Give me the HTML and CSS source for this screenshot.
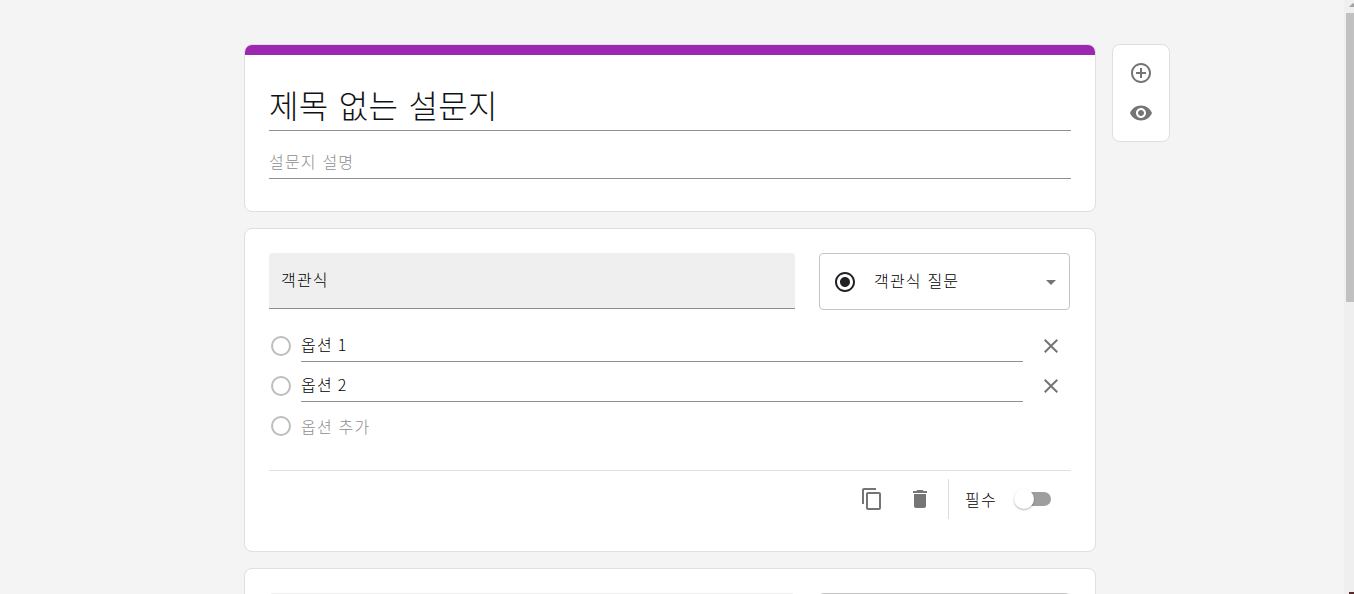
FILE: index.html
```html
<!DOCTYPE html>
<html lang="ko">
<head>
<meta charset="utf-8">
<title>설문지</title>
<link rel="stylesheet" href="styles.css">
</head>
<body>
<div class="viewport">
  <main class="page">
    <div class="cards">
      <section class="card title-card">
        <h1 class="form-title">제목 없는 설문지</h1>
        <div class="form-desc">설문지 설명</div>
      </section>
      <section class="card question-card">
        <div class="question-head">
          <div class="question-field">객관식</div>
          <div class="type-select">
            <svg class="icon dark" viewBox="0 0 24 24"><path d="M12 7c-2.76 0-5 2.24-5 5s2.24 5 5 5 5-2.24 5-5-2.24-5-5-5zm0-5C6.48 2 2 6.48 2 12s4.48 10 10 10 10-4.48 10-10S17.52 2 12 2zm0 18c-4.42 0-8-3.58-8-8s3.58-8 8-8 8 3.58 8 8-3.58 8-8 8z"/></svg>
            <span class="type-label">객관식 질문</span>
            <svg class="icon" viewBox="0 0 24 24"><path d="M7 10l5 5 5-5z"/></svg>
          </div>
        </div>
        <div class="options">
          <div class="option">
            <span class="radio"></span>
            <span class="option-text">옵션 1</span>
            <svg class="icon" viewBox="0 0 24 24"><path d="M19 6.41L17.59 5 12 10.59 6.41 5 5 6.41 10.59 12 5 17.59 6.41 19 12 13.41 17.59 19 19 17.59 13.41 12z"/></svg>
          </div>
          <div class="option">
            <span class="radio"></span>
            <span class="option-text">옵션 2</span>
            <svg class="icon" viewBox="0 0 24 24"><path d="M19 6.41L17.59 5 12 10.59 6.41 5 5 6.41 10.59 12 5 17.59 6.41 19 12 13.41 17.59 19 19 17.59 13.41 12z"/></svg>
          </div>
          <div class="option">
            <span class="radio"></span>
            <span class="option-add">옵션 추가</span>
          </div>
        </div>
        <div class="question-foot">
          <svg class="icon" viewBox="0 0 24 24"><path d="M16 1H4c-1.1 0-2 .9-2 2v14h2V3h12V1zm3 4H8c-1.1 0-2 .9-2 2v14c0 1.100.9 2 2 2h11c1.100 0 2-.9 2-2V7c0-1.100-.9-2-2-2zm0 16H8V7h11v14z"/></svg>
          <svg class="icon" viewBox="0 0 24 24"><path d="M6 19c0 1.100.9 2 2 2h8c1.100 0 2-.9 2-2V7H6v12zM19 4h-3.500l-1-1h-5l-1 1H5v2h14V4z"/></svg>
          <div class="required">
            <span class="required-label">필수</span>
            <span class="switch"><span class="knob"></span></span>
          </div>
        </div>
      </section>
      <section class="card question-card">
        <div class="question-head">
          <div class="question-field"></div>
          <div class="type-select"></div>
        </div>
      </section>
    </div>
    <aside class="toolbar">
      <svg class="icon" viewBox="0 0 24 24"><path d="M13 7h-2v4H7v2h4v4h2v-4h4v-2h-4V7zm-1-5C6.480 2 2 6.480 2 12s4.480 10 10 10 10-4.480 10-10S17.520 2 12 2zm0 18c-4.410 0-8-3.590-8-8s3.590-8 8-8 8 3.590 8 8-3.590 8-8 8z"/></svg>
      <svg class="icon" viewBox="0 0 24 24"><path d="M12 4.500C7 4.500 2.730 7.610 1 12c1.730 4.390 6 7.500 11 7.500s9.270-3.110 11-7.500c-1.730-4.390-6-7.500-11-7.500zM12 17c-2.760 0-5-2.240-5-5s2.240-5 5-5 5 2.240 5 5-2.240 5-5 5zm0-8c-1.660 0-3 1.340-3 3s1.340 3 3 3 3-1.340 3-3-1.340-3-3-3z"/></svg>
    </aside>
  </main>
  <div class="scrollbar">
    <svg class="scroll-arrow" viewBox="0 0 5 4"><path d="M0 4L4 0l4 4z"/></svg>
    <div class="scroll-thumb"></div>
    <span class="scroll-end"></span>
  </div>
</div>
</body>
</html>
```

FILE: styles.css
```css
* { box-sizing: border-box; }
body {
  margin: 0;
  height: 594px;
  overflow: hidden;
  background: #f4f4f4;
  color: #000;
  font: 300 16px/24px "Noto Sans CJK KR", sans-serif;
  letter-spacing: 1.2px;
}
.viewport { display: flex; height: 594px; overflow: hidden; }
.page {
  flex: 1;
  display: flex;
  align-items: flex-start;
  gap: 16px;
  padding: 44px 0 0 244px;
}
.cards { width: 852px; display: flex; flex-direction: column; gap: 16px; }
.card {
  border: 1px solid #dfdfdf;
  border-radius: 8px;
  background: #fff;
  padding: 24px;
  overflow: hidden;
}
.title-card { height: 168px; padding-top: 0; }
.title-card::before {
  content: "";
  display: block;
  height: 10px;
  margin: 0 -24px;
  background: #9c27b0;
}
.form-title {
  margin: 28px 0 0;
  height: 48px;
  border-bottom: 1px solid #919191;
  color: #111214;
  font-size: 32px;
  font-weight: 300;
  line-height: 42px;
  letter-spacing: 0.3px;
  word-spacing: 1px;
}
.form-desc {
  height: 48px;
  padding-top: 18px;
  border-bottom: 1px solid #919191;
  color: #8e8e8e;
}
.question-card { height: 324px; }
.question-head { display: flex; gap: 24px; }
.question-field {
  width: 526px;
  height: 56px;
  padding: 14px 12px;
  border-bottom: 1px solid #8d8d8d;
  border-radius: 4px 4px 0 0;
  background: #efefef;
}
.type-select {
  width: 251px;
  height: 57px;
  display: flex;
  align-items: center;
  padding: 0 6px 0 13px;
  border: 1px solid #c4c4c4;
  border-radius: 4px;
}
.type-label { flex: 1; margin-left: 17px; padding-bottom: 4px; }
.icon { width: 24px; height: 24px; flex: none; fill: #757575; }
.icon.dark { fill: #202124; }
.options { margin-top: 16px; }
.option { height: 40px; display: flex; align-items: center; }
.radio {
  width: 20px;
  height: 20px;
  margin: 0 10px 0 2px;
  border: 2px solid #bdbdbd;
  border-radius: 50%;
}
.option-text {
  width: 722px;
  height: 32px;
  margin-right: 16px;
  padding-top: 2px;
  border-bottom: 1px solid #919191;
  word-spacing: -0.8px;
}
.option-add { color: #8e8e8e; }
.question-foot {
  display: flex;
  align-items: center;
  justify-content: flex-end;
  gap: 24px;
  height: 57px;
  margin-top: 24px;
  padding-right: 20px;
  border-top: 1px solid #e0e0e0;
}
.question-foot .required { margin-left: -8px; }
.required {
  display: flex;
  align-items: center;
  height: 40px;
  padding-left: 16px;
  border-left: 1px solid #dcdcdc;
}
.required-label { width: 50px; padding-bottom: 1px; }
.switch {
  width: 36px;
  height: 14px;
  display: flex;
  align-items: center;
  border-radius: 7px;
  background: linear-gradient(#9e9ea0, #9e9ea0) right / 30px 14px no-repeat;
}
.knob {
  width: 20px;
  height: 20px;
  flex: none;
  margin-left: -1px;
  border-radius: 50%;
  background: #fff;
  box-shadow: 0 1px 2px rgba(0, 0, 0, 0.3);
}
.toolbar {
  width: 58px;
  height: 98px;
  display: flex;
  flex-direction: column;
  align-items: center;
  gap: 16px;
  padding-top: 16px;
  border: 1px solid #dfdfdf;
  border-radius: 8px;
  background: #fff;
}
.scrollbar {
  width: 10px;
  display: flex;
  flex-direction: column;
  align-items: flex-end;
  background: #efefef;
}
.scroll-arrow { width: 5px; height: 4px; margin: 3px 0 6px; fill: #a3a3a3; }
.scroll-thumb { width: 8px; height: 289px; background: #c1c1c1; }
.scroll-end { width: 5px; height: 2px; margin-top: auto; background: #5a2a2a; }
```
